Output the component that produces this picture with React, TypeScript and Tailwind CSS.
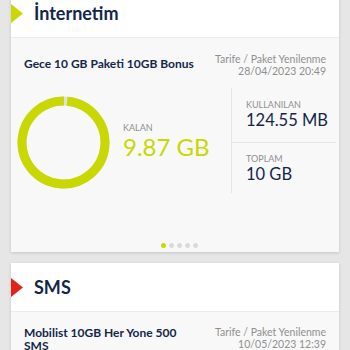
import React from "react";

const font = { fontFamily: 'Lato, "Noto Sans", sans-serif' };

function Ring() {
  const r = 41.5;
  const c = 2 * Math.PI * r;
  const lime = c * (355 / 360);
  return (
    <svg width="93" height="93" viewBox="0 0 93 93">
      <circle cx="46.5" cy="46.5" r={r} fill="none" stroke="#e0e0e0" strokeWidth="9" />
      <circle
        cx="46.5"
        cy="46.5"
        r={r}
        fill="none"
        stroke="#c8d800"
        strokeWidth="9"
        strokeDasharray={`${lime} ${c}`}
        transform="rotate(-85 46.5 46.5)"
      />
    </svg>
  );
}

function Header({ title, color }: { title: string; color: string }) {
  return (
    <div className="relative flex h-[49px] items-center bg-white border-b border-[#ececec]">
      <svg className="absolute left-0 top-[15px]" width="12" height="19" viewBox="0 0 12 19">
        <polygon points="0,0 12,9.5 0,19" fill={color} />
      </svg>
      <span className="pl-[23px] text-[18px] font-bold text-[#13264a]">{title}</span>
    </div>
  );
}

function Renew({ date }: { date: string }) {
  return (
    <div className="text-right text-[10.5px] leading-[12px] text-[#8f8f8f] whitespace-nowrap">
      <div>Tarife / Paket Yenilenme</div>
      <div>{date}</div>
    </div>
  );
}

export default function App() {
  return (
    <div className="w-[350px] h-[350px] overflow-hidden bg-[#e6e6e6]" style={font}>
      <div className="-mt-[11px] mx-[11px] shadow-[0_1px_3px_rgba(0,0,0,0.15)]">
        <Header title="İnternetim" color="#c8d800" />
        <div className="bg-[#f8f8f8] h-[214px] flex flex-col">
          <div className="flex justify-between items-start pt-[15px] pl-[13px] pr-[13px]">
            <div className="pt-[4px] text-[12px] font-bold leading-[14px] text-[#13264a] whitespace-nowrap">Gece 10 GB Paketi 10GB Bonus</div>
            <Renew date="28/04/2023 20:49" />
          </div>
          <div className="flex mt-[11px] h-[105px]">
            <div className="w-[220px] flex items-start">
              <div className="ml-[6px] mt-[8px]">
                <Ring />
              </div>
              <div className="ml-[13px] mt-[35px]">
                <div className="text-[9px] leading-[10px] text-[#8f8f8f] mb-[2px]">KALAN</div>
                <div className="text-[24px] leading-[24px] text-[#c8d800]">9.87 GB</div>
              </div>
            </div>
            <div className="flex-1 border-l border-[#e6e6e6] flex flex-col">
              <div className="h-[55px] border-b border-[#e6e6e6] pl-[14px] pt-[12px] mr-[3px]">
                <div className="text-[9px] leading-[10px] text-[#8f8f8f]">KULLANILAN</div>
                <div className="text-[16.5px] leading-[20px] text-[#13264a]">124.55 MB</div>
              </div>
              <div className="pl-[14px] pt-[11px]">
                <div className="text-[9px] leading-[10px] text-[#8f8f8f]">TOPLAM</div>
                <div className="text-[16.5px] leading-[20px] text-[#13264a]">10 GB</div>
              </div>
            </div>
          </div>
          <div className="mt-auto mb-[4px] flex justify-center gap-[3px] pl-[8px]">
            <div className="w-[5px] h-[5px] rounded-full bg-[#c8d800]" />
            <div className="w-[5px] h-[5px] rounded-full bg-[#dadada]" />
            <div className="w-[5px] h-[5px] rounded-full bg-[#dadada]" />
            <div className="w-[5px] h-[5px] rounded-full bg-[#dadada]" />
            <div className="w-[5px] h-[5px] rounded-full bg-[#dadada]" />
          </div>
        </div>
      </div>
      <div className="mt-[11px] mx-[11px] shadow-[0_1px_3px_rgba(0,0,0,0.15)]">
        <Header title="SMS" color="#e2231a" />
        <div className="bg-[#f8f8f8] h-[120px]">
          <div className="flex justify-between items-start pt-[14px] pl-[13px] pr-[13px]">
            <div className="w-[160px] pt-[1px] text-[12px] font-bold leading-[12.5px] text-[#13264a]">Mobilist 10GB Her Yone 500 SMS</div>
            <Renew date="10/05/2023 12:39" />
          </div>
        </div>
      </div>
    </div>
  );
}
